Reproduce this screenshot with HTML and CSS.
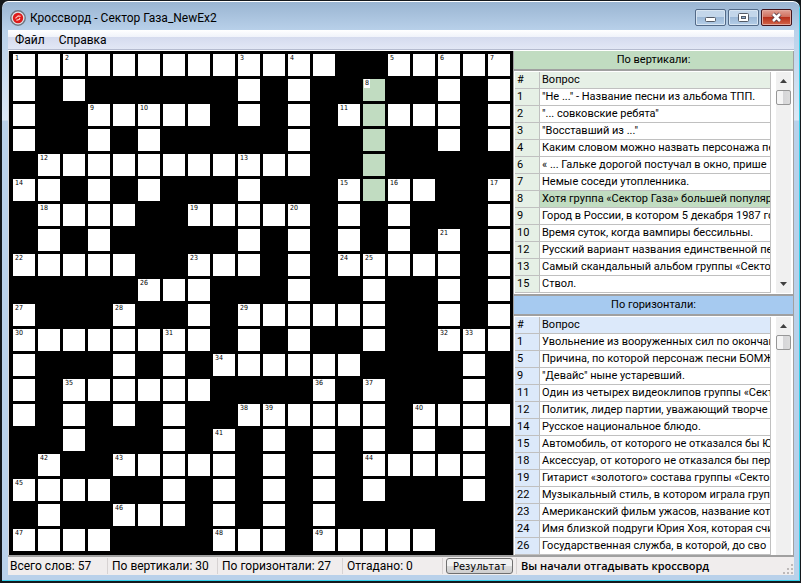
FILE: index.html
```html
<!DOCTYPE html>
<html lang="ru">
<head>
    <meta charset="UTF-8">
    <meta name="viewport" content="width=device-width, initial-scale=1.0">
    <title>Кроссворд - Сектор Газа_NewEx2</title>
    <link rel="stylesheet" href="styles.css">
</head>
<body>
    <div class="window">
        <header class="titlebar">
            <svg class="app-icon" viewBox="0 0 16 16" aria-hidden="true">
                <circle cx="8" cy="8" r="7.2" fill="#dfe3e8" stroke="#6f7680" stroke-width="1.4"/>
                <circle cx="8" cy="8" r="5.2" fill="#dd1b1b"/>
                <path d="M5.4 8.4 8.2 5.8 10.6 6.4M6.4 10.4 9.4 9.4 9.8 7.8" fill="none" stroke="#ffc4bb" stroke-width="1.2"/>
            </svg>
            <h1 class="title">Кроссворд - Сектор Газа_NewEx2</h1>
            <div class="window-buttons">
                <button type="button" class="win-btn" aria-label="Свернуть">
                    <svg width="13" height="11" viewBox="0 0 13 11"><rect x="1.5" y="5.5" width="10" height="4" rx="1" fill="#fff" stroke="#535a66"/></svg>
                </button>
                <button type="button" class="win-btn" aria-label="Развернуть">
                    <svg width="13" height="11" viewBox="0 0 13 11"><rect x="1.5" y="1.5" width="10" height="8" rx="1" fill="#fff" stroke="#535a66"/><rect x="4.5" y="4.5" width="4" height="2" fill="#8fb0d2" stroke="#535a66"/></svg>
                </button>
                <button type="button" class="win-btn close" aria-label="Закрыть">
                    <svg width="13" height="11" viewBox="0 0 13 11"><path d="M3 2 10 9M10 2 3 9" stroke="#5a3a42" stroke-width="4.4"/><path d="M3 2 10 9M10 2 3 9" stroke="#fff" stroke-width="2.6"/></svg>
                </button>
            </div>
        </header>

        <div class="client">
            <nav class="menu">
                <button type="button">Файл</button>
                <button type="button">Справка</button>
            </nav>

            <main class="content">
                <div class="board" id="board"></div>

                <div class="clues">
                    <section class="panel down">
                        <h2>По вертикали:</h2>
                        <div class="list">
                            <div class="questions">
                                <table>
                                    <thead>
                                        <tr><th class="num">#</th><th>Вопрос</th></tr>
                                    </thead>
                                    <tbody>
                                        <tr><td>1</td><td>"Не ..." - Название песни из альбома ТПП.</td></tr>
                                        <tr><td>2</td><td>"... совковские ребята"</td></tr>
                                        <tr><td>3</td><td>"Восставший из ..."</td></tr>
                                        <tr><td>4</td><td>Каким словом можно назвать персонажа песн</td></tr>
                                        <tr><td>6</td><td>« ... Гальке дорогой постучал в окно, прише</td></tr>
                                        <tr><td>7</td><td>Немые соседи утопленника.</td></tr>
                                        <tr class="selected"><td>8</td><td>Хотя группа «Сектор Газа» большей популяр</td></tr>
                                        <tr><td>9</td><td>Город в России, в котором 5 декабря 1987 го</td></tr>
                                        <tr><td>10</td><td>Время суток, когда вампиры бессильны.</td></tr>
                                        <tr><td>12</td><td>Русский вариант названия единственной пес</td></tr>
                                        <tr><td>13</td><td>Самый скандальный альбом группы «Сектор</td></tr>
                                        <tr><td>15</td><td>Ствол.</td></tr>
                                    </tbody>
                                </table>
                            </div>
                            <div class="scroll">
                                <button type="button" class="arrow" aria-label="Вверх"><svg width="7" height="4" viewBox="0 0 7 4"><path d="M0 4 3.5 0 7 4z" fill="#404040"/></svg></button>
                                <div class="thumb"></div>
                                <button type="button" class="arrow bottom" aria-label="Вниз"><svg width="7" height="4" viewBox="0 0 7 4"><path d="M0 0 3.5 4 7 0z" fill="#404040"/></svg></button>
                            </div>
                        </div>
                    </section>

                    <section class="panel across">
                        <h2>По горизонтали:</h2>
                        <div class="list">
                            <div class="questions">
                                <table>
                                    <thead>
                                        <tr><th class="num">#</th><th>Вопрос</th></tr>
                                    </thead>
                                    <tbody>
                                        <tr><td>1</td><td>Увольнение из вооруженных сил по окончан</td></tr>
                                        <tr><td>5</td><td>Причина, по которой персонаж песни БОМЖ</td></tr>
                                        <tr><td>9</td><td>"Девайс" ныне устаревший.</td></tr>
                                        <tr><td>11</td><td>Один из четырех видеоклипов группы «Сект</td></tr>
                                        <tr><td>12</td><td>Политик, лидер партии, уважающий творче</td></tr>
                                        <tr><td>14</td><td>Русское национальное блюдо.</td></tr>
                                        <tr><td>15</td><td>Автомобиль, от которого не отказался бы Ю</td></tr>
                                        <tr><td>18</td><td>Аксессуар, от которого не отказался бы пер</td></tr>
                                        <tr><td>19</td><td>Гитарист «золотого» состава группы «Секто</td></tr>
                                        <tr><td>22</td><td>Музыкальный стиль, в котором играла групп</td></tr>
                                        <tr><td>23</td><td>Американский фильм ужасов, название кото</td></tr>
                                        <tr><td>24</td><td>Имя близкой подруги Юрия Хоя, которая счи</td></tr>
                                        <tr><td>26</td><td>Государственная служба, в которой, до сво</td></tr>
                                    </tbody>
                                </table>
                            </div>
                            <div class="scroll">
                                <button type="button" class="arrow" aria-label="Вверх"><svg width="7" height="4" viewBox="0 0 7 4"><path d="M0 4 3.5 0 7 4z" fill="#404040"/></svg></button>
                                <div class="thumb"></div>
                            </div>
                        </div>
                    </section>
                </div>
            </main>

            <footer class="status">
                <span class="part words">Всего слов: 57</span>
                <span class="part">По вертикали: 30</span>
                <span class="part wide">По горизонтали: 27</span>
                <span class="part last">Отгадано: 0</span>
                <button type="button" class="result">Результат</button>
                <span class="message">Вы начали отгадывать кроссворд</span>
                <svg class="grip" width="11" height="11" viewBox="0 0 11 11" aria-hidden="true"><path d="M8 0h2v2h-2zM4 4h2v2h-2zM8 4h2v2h-2zM0 8h2v2h-2zM4 8h2v2h-2zM8 8h2v2h-2z" fill="#bdb9b9"/></svg>
            </footer>
        </div>
    </div>
    <script src="board.js"></script>
</body>
</html>
```
FILE: styles.css
```css
* {
    box-sizing: border-box;
}
body {
    margin: 0;
    background-color: #14181c;
    font-family: Roboto, "DejaVu Sans Condensed", sans-serif;
    font-size: 11px;
    color: #000;
}
button {
    font-family: inherit;
    font-size: inherit;
    color: inherit;
}
.window {
    display: flex;
    flex-direction: column;
    min-height: 100vh;
    padding: 0 6px 6px;
    border: 1px solid #14181c;
    border-left-width: 2px;
    border-bottom-width: 2px;
    border-radius: 8px 8px 0 0;
    background: linear-gradient(#99b4d1, #b9d1ea 30px, #dce8f5 119px, #b9d1ea 120px);
    box-shadow: inset 0 1px #fff, inset -1px -1px #35d0ea;
}

/* Заголовок окна */
.titlebar {
    display: flex;
    align-items: center;
    height: 29px;
    padding: 4px 2px 0 2px;
}
.app-icon {
    width: 16px;
    height: 16px;
}
.title {
    flex: 1;
    margin: 0 0 0 4px;
    font-size: 12px;
    font-weight: normal;
}
.window-buttons {
    display: flex;
    gap: 2px;
}
.win-btn {
    display: flex;
    align-items: center;
    justify-content: center;
    width: 31px;
    height: 17px;
    padding: 0;
    border: 1px solid #536a88;
    border-radius: 2px;
    background: linear-gradient(#c3d6ea 50%, #9db9d7 50%, #b5cee8);
    box-shadow: inset 0 0 0 1px #d8e5f2;
}
.close {
    border-color: #43141c;
    background: linear-gradient(#e0a195, #cf6a58 50%, #b8311c 50%, #d4664a);
    box-shadow: inset 0 0 0 1px #e3a89c;
}

.client {
    display: flex;
    flex-direction: column;
    flex: 1;
}
.menu {
    display: flex;
    height: 20px;
    border-bottom: 1px solid #b5bbcf;
    background: linear-gradient(#fff, #f0f3fa 7px, #d5dbee 7px, #e2e7f5);
    font-size: 12px;
}
.menu button {
    padding: 0 7px;
    border: none;
    background: none;
}
.content {
    display: flex;
    flex: 1;
    border-top: 1px solid #fff;
    border-bottom: 2px solid #a0a0a0;
    background-color: #000;
}

/* Поле кроссворда */
.board {
    display: grid;
    grid-template-columns: repeat(20, 22px);
    grid-auto-rows: 22px;
    gap: 3px;
    padding: 3px 3px 4px 4px;
    border-left: 1px solid #d8d8d8;
    align-content: start;
}
.cell {
    position: relative;
    background-color: #fff;
}
.cell label {
    position: absolute;
    top: 0;
    left: 1px;
    padding: 0 1px;
    background-color: #fff;
    font-family: "DejaVu Sans Condensed", sans-serif;
    font-size: 7px;
    line-height: 9px;
}
.cell input {
    display: block;
    width: 100%;
    height: 100%;
    padding: 0;
    border: none;
    background: none;
    text-align: center;
    text-transform: uppercase;
}
.cell.active {
    background-color: #c1dcc1;
}

/* Списки вопросов */
.clues {
    display: flex;
    flex-direction: column;
    flex: 1;
    min-width: 0;
    border-left: 1px solid #a0a0a0;
    background-color: #fff;
}
.panel h2 {
    margin: 0;
    height: 20px;
    border-right: 1px solid #a0a0a0;
    border-bottom: 2px solid #a0a0a0;
    font-size: 11px;
    font-weight: normal;
    line-height: 18px;
    text-align: center;
}
.down h2 {
    background-color: #c1dcc1;
}
.across h2 {
    background-color: #a6caf0;
}
.across {
    display: flex;
    flex-direction: column;
    flex: 1;
    border-top: 2px solid #a0a0a0;
}
.list {
    display: flex;
    gap: 5px;
    padding: 1px 2px 1px 1px;
    border-right: 1px solid #a0a0a0;
}
.across .list {
    flex: 1;
    padding-bottom: 0;
}
.questions {
    flex: 1;
    min-width: 0;
}
.questions table {
    width: 100%;
    table-layout: fixed;
    border-collapse: separate;
    border-spacing: 0;
}
.questions th,
.questions td {
    height: 17px;
    padding: 0 0 0 2px;
    border-right: 1px solid #c0c0c0;
    border-bottom: 1px solid #c0c0c0;
    font-weight: normal;
    line-height: 16px;
    text-align: left;
    white-space: nowrap;
    overflow: hidden;
}
.questions .num {
    width: 25px;
}
.down th,
.down td:first-child {
    background-color: #e6f0e6;
}
.across th,
.across td:first-child {
    background-color: #dce9fa;
}
.selected td:last-child {
    background-color: #c1dcc1;
}
.scroll {
    display: flex;
    flex-direction: column;
    width: 15px;
    background-color: #f0f0f0;
}
.arrow {
    display: flex;
    align-items: center;
    justify-content: center;
    height: 18px;
    padding: 0;
    border: none;
    background: none;
}
.bottom {
    margin-top: auto;
}
.thumb {
    height: 15px;
    border: 1px solid #979797;
    border-radius: 2px;
    background: linear-gradient(to right, #f5f5f5 50%, #d6d6d8 50%, #dcdcdc);
}

/* Строка состояния */
.status {
    display: flex;
    align-items: center;
    height: 18px;
    background-color: #f0eded;
    font-size: 12px;
    line-height: 18px;
    white-space: nowrap;
}
.part {
    width: 110px;
    padding-left: 4px;
    border-right: 1px solid #d7d3d3;
    line-height: 16px;
}
.words {
    width: 100px;
    padding-left: 2px;
}
.wide {
    width: 125px;
}
.last {
    width: 100px;
}
.result {
    width: 67px;
    height: 16px;
    margin: 0 3px;
    padding: 0;
    border: 1px solid #707070;
    border-radius: 3px;
    background: linear-gradient(#f2f2f2 50%, #dcdcdc 50%, #cfcfcf);
    font-family: "DejaVu Sans Condensed", sans-serif;
    font-size: 11px;
    line-height: 13px;
}
.message {
    flex: 1;
    padding-left: 4px;
    border-left: 1px solid #d7d3d3;
    font-family: "Open Sans", sans-serif;
    font-size: 11px;
    font-weight: 600;
    line-height: 16px;
}
.grip {
    align-self: flex-end;
}
```
FILE: board.js
```js
// '.' - пустая клетка, 'o' - буква, 'x' - буква выбранного слова
const rows = [
    'ooooooooooooo..ooooo',
    'o.o......o.o..x..o.o',
    'o..ooooo.o.o.oxooo.o',
    'o..o.o.....o..x..o.o',
    '.ooooooooooo..x.....',
    'oo.o.o...o...oxoo..o',
    '.oooo..ooooo.o.o...o',
    '.o.o.....o.o.o.o.o.o',
    'ooooo..ooo.o.ooooo.o',
    '.....ooo...o..o..o.o',
    'o...o..o.oooooo..o.o',
    'oooooooo.o.o..o..ooo',
    'o...o.o.oooooo....o.',
    'o.oooooo....o.o...o.',
    'o.o.o.o..oooooo.oooo',
    '..o...o.o.o.o.o.o.o.',
    '.o..ooooo.o.o.ooooo.',
    'oooo..o.o.o.o.o...o.',
    '.o..ooo.o.o.o.......',
    'oooo....ooo.ooooo...'
];

// номера слов: 'строка-столбец'
const numbers = [
    '0-0', '0-2', '0-9', '0-11', '0-15', '0-17', '0-19', '1-14', '2-3', '2-5',
    '2-13', '4-1', '4-9', '5-0', '5-13', '5-15', '5-19', '6-1', '6-7', '6-11',
    '7-17', '8-0', '8-7', '8-13', '8-14', '9-5', '10-0', '10-4', '10-9', '11-0',
    '11-6', '11-17', '11-18', '12-8', '13-2', '13-12', '13-14', '14-9', '14-10', '14-16',
    '15-8', '16-1', '16-4', '16-14', '17-0', '18-4', '19-0', '19-8', '19-12'
];

const board = document.getElementById('board');

rows.forEach(function (row, r) {
    row.split('').forEach(function (type, c) {
        const cell = document.createElement('div');
        if (type !== '.') {
            const id = 'c' + r + '-' + c;
            const number = numbers.indexOf(r + '-' + c) + 1;
            cell.className = type === 'x' ? 'cell active' : 'cell';

            const input = document.createElement('input');
            input.type = 'text';
            input.id = id;
            input.maxLength = 1;
            input.setAttribute('aria-label', 'Строка ' + (r + 1) + ', столбец ' + (c + 1));
            cell.appendChild(input);

            if (number) {
                const label = document.createElement('label');
                label.htmlFor = id;
                label.innerText = number;
                cell.appendChild(label);
            }
        }
        board.appendChild(cell);
    });
});
```
